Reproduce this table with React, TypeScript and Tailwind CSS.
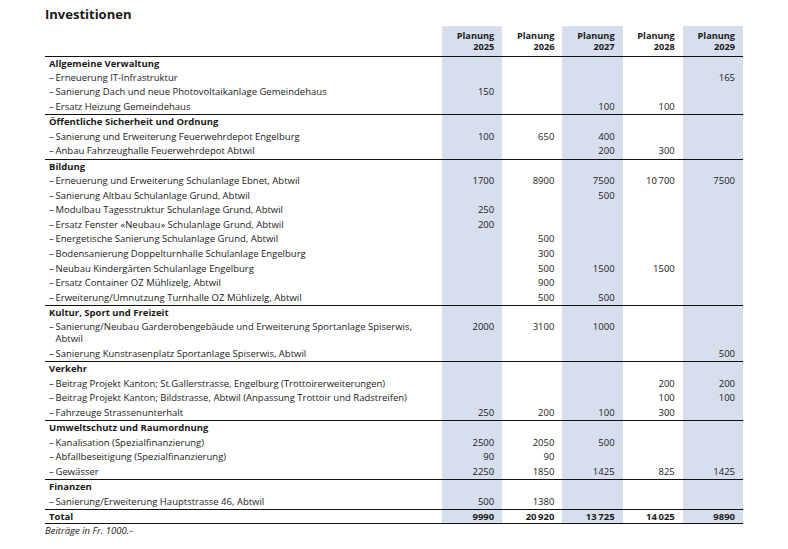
import React from 'react';

type Item = { label: React.ReactNode; values: (string | null)[] };
type Group = { title: string; items: Item[] };

const years = ['2025', '2026', '2027', '2028', '2029'];

const groups: Group[] = [
  {
    title: 'Allgemeine Verwaltung',
    items: [
      { label: 'Erneuerung IT-Infrastruktur', values: [null, null, null, null, '165'] },
      { label: 'Sanierung Dach und neue Photovoltaikanlage Gemeindehaus', values: ['150', null, null, null, null] },
      { label: 'Ersatz Heizung Gemeindehaus', values: [null, null, '100', '100', null] },
    ],
  },
  {
    title: 'Öffentliche Sicherheit und Ordnung',
    items: [
      { label: 'Sanierung und Erweiterung Feuerwehrdepot Engelburg', values: ['100', '650', '400', null, null] },
      { label: 'Anbau Fahrzeughalle Feuerwehrdepot Abtwil', values: [null, null, '200', '300', null] },
    ],
  },
  {
    title: 'Bildung',
    items: [
      { label: 'Erneuerung und Erweiterung Schulanlage Ebnet, Abtwil', values: ['1700', '8900', '7500', '10\u2009700', '7500'] },
      { label: 'Sanierung Altbau Schulanlage Grund, Abtwil', values: [null, null, '500', null, null] },
      { label: 'Modulbau Tagesstruktur Schulanlage Grund, Abtwil', values: ['250', null, null, null, null] },
      { label: 'Ersatz Fenster «Neubau» Schulanlage Grund, Abtwil', values: ['200', null, null, null, null] },
      { label: 'Energetische Sanierung Schulanlage Grund, Abtwil', values: [null, '500', null, null, null] },
      { label: 'Bodensanierung Doppelturnhalle Schulanlage Engelburg', values: [null, '300', null, null, null] },
      { label: 'Neubau Kindergärten Schulanlage Engelburg', values: [null, '500', '1500', '1500', null] },
      { label: 'Ersatz Container OZ Mühlizelg, Abtwil', values: [null, '900', null, null, null] },
      { label: 'Erweiterung/Umnutzung Turnhalle OZ Mühlizelg, Abtwil', values: [null, '500', '500', null, null] },
    ],
  },
  {
    title: 'Kultur, Sport und Freizeit',
    items: [
      {
        label: (
          <>
            Sanierung/Neubau Garderobengebäude und Erweiterung Sportanlage Spiserwis,
            <br />
            Abtwil
          </>
        ),
        values: ['2000', '3100', '1000', null, null],
      },
      { label: 'Sanierung Kunstrasenplatz Sportanlage Spiserwis, Abtwil', values: [null, null, null, null, '500'] },
    ],
  },
  {
    title: 'Verkehr',
    items: [
      { label: 'Beitrag Projekt Kanton; St.Gallerstrasse, Engelburg (Trottoirerweiterungen)', values: [null, null, null, '200', '200'] },
      { label: 'Beitrag Projekt Kanton; Bildstrasse, Abtwil (Anpassung Trottoir und Radstreifen)', values: [null, null, null, '100', '100'] },
      { label: 'Fahrzeuge Strassenunterhalt', values: ['250', '200', '100', '300', null] },
    ],
  },
  {
    title: 'Umweltschutz und Raumordnung',
    items: [
      { label: 'Kanalisation (Spezialfinanzierung)', values: ['2500', '2050', '500', null, null] },
      { label: 'Abfallbeseitigung (Spezialfinanzierung)', values: ['90', '90', null, null, null] },
      { label: 'Gewässer', values: ['2250', '1850', '1425', '825', '1425'] },
    ],
  },
  {
    title: 'Finanzen',
    items: [{ label: 'Sanierung/Erweiterung Hauptstrasse 46, Abtwil', values: ['500', '1380', null, null, null] }],
  },
];

const totals = ['9990', '20\u2009920', '13\u2009725', '14\u2009025', '9890'];

// shaded columns: 2025, 2027, 2029
const shade = (i: number) => (i % 2 === 0 ? 'bg-[#d7deee]' : '');

export default function App() {
  return (
    <div
      className="w-[788px] h-[549px] bg-white text-[#1a1a1a] pl-[45px] pt-[5px]"
      style={{ fontFamily: '"Open Sans", "Noto Sans", sans-serif' }}
    >
      <h1 className="text-[13px] leading-[18px] font-bold">Investitionen</h1>

      <table className="mt-[3px] w-[698px] border-collapse text-[9.5px] leading-[12px] table-fixed">
        <colgroup>
          <col className="w-[397px]" />
          {years.map((y) => (
            <col key={y} className="w-[60.2px]" />
          ))}
        </colgroup>
        <thead>
          <tr className="border-b border-[#111]">
            <th />
            {years.map((y, i) => (
              <th
                key={y}
                className={`${shade(i)} h-[30px] pr-[8px] text-right align-middle text-[9.2px] font-bold leading-[11px]`}
              >
                <div>Planung</div>
                <div>{y}</div>
              </th>
            ))}
          </tr>
        </thead>
        <tbody>
          {groups.map((g) => (
            <React.Fragment key={g.title}>
              <tr className="border-t border-[#111]">
                <td className="h-[14.6px] pl-[4px] font-bold align-middle">{g.title}</td>
                {years.map((y, i) => (
                  <td key={y} className={shade(i)} />
                ))}
              </tr>
              {g.items.map((it, k) => (
                <tr key={k}>
                  <td className="h-[14.6px] pl-[4px] pr-[6px] py-[1.3px] align-top">
                    <div className="flex">
                      <span className="w-[6.5px] shrink-0">–</span>
                      <span>{it.label}</span>
                    </div>
                  </td>
                  {it.values.map((v, i) => (
                    <td
                      key={i}
                      className={`${shade(i)} pr-[8px] py-[1.3px] text-right align-top whitespace-nowrap`}
                    >
                      {v}
                    </td>
                  ))}
                </tr>
              ))}
            </React.Fragment>
          ))}
          <tr className="border-y border-[#111] font-bold">
            <td className="h-[14.6px] pl-[4px] align-middle">Total</td>
            {totals.map((t, i) => (
              <td key={i} className={`${shade(i)} pr-[8px] text-right align-middle whitespace-nowrap`}>
                {t}
              </td>
            ))}
          </tr>
        </tbody>
      </table>

      <p className="text-[9.5px] leading-[14px] italic">Beiträge in Fr. 1000.–</p>
    </div>
  );
}
